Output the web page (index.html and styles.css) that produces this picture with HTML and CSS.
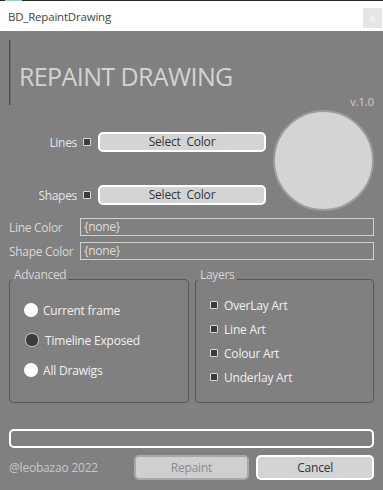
FILE: index.html
```html
<!DOCTYPE html>
<html>
<head>
<meta charset="utf-8">
<link rel="stylesheet" href="styles.css">
</head>
<body>
<div class="topline"><span class="accent"></span></div>
<div class="titlebar">
  <span class="wtitle">BD_RepaintDrawing</span>
  <span class="close">×</span>
</div>
<div class="body">
  <div class="header">
    <div class="vbar"></div>
    <div class="htitle">REPAINT DRAWING</div>
  </div>
  <div class="version">v.1.0</div>
  <div class="colorsec">
    <div class="rows">
      <div class="row">
        <span class="rlabel">Lines</span>
        <span class="chk"></span>
        <button class="btn sel">Select&nbsp; Color</button>
      </div>
      <div class="row">
        <span class="rlabel">Shapes</span>
        <span class="chk"></span>
        <button class="btn sel">Select&nbsp; Color</button>
      </div>
    </div>
    <div class="swatch"></div>
  </div>
  <div class="field">
    <span class="flabel">Line Color</span>
    <div class="finput">{none}</div>
  </div>
  <div class="field">
    <span class="flabel">Shape Color</span>
    <div class="finput">{none}</div>
  </div>
  <div class="groups">
    <fieldset class="group adv">
      <legend>Advanced</legend>
      <div class="opt"><span class="radio"></span>Current frame</div>
      <div class="opt"><span class="radio on"></span>Timeline Exposed</div>
      <div class="opt"><span class="radio"></span>All Drawigs</div>
    </fieldset>
    <fieldset class="group lay">
      <legend>Layers</legend>
      <div class="lopt"><span class="chk"></span>OverLay Art</div>
      <div class="lopt"><span class="chk"></span>Line Art</div>
      <div class="lopt"><span class="chk"></span>Colour Art</div>
      <div class="lopt"><span class="chk"></span>Underlay Art</div>
    </fieldset>
  </div>
  <div class="progress"></div>
  <div class="footer">
    <span class="credit">@leobazao 2022</span>
    <button class="btn repaint">Repaint</button>
    <button class="btn cancel">Cancel</button>
  </div>
</div>
</body>
</html>
```
FILE: styles.css
```css
html, body {
  margin: 0;
  padding: 0;
  width: 383px;
  height: 490px;
  overflow: hidden;
  background: #808080;
  font-family: "Open Sans", "Noto Sans", sans-serif;
}
.topline {
  height: 1px;
  background: #2b2b2b;
  position: relative;
}
.accent {
  position: absolute;
  left: 5px;
  top: 0;
  width: 17px;
  height: 1px;
  background: #8fd0d8;
}
.titlebar {
  height: 30px;
  background: #ffffff;
  display: flex;
  align-items: center;
  justify-content: space-between;
  padding: 0 1px 0 8px;
}
.wtitle {
  font-size: 11.5px;
  color: #444;
  letter-spacing: -0.2px;
}
.close {
  width: 19px;
  height: 20px;
  background: #e6e6e6;
  color: #fafafa;
  font-size: 12px;
  display: flex;
  align-items: center;
  justify-content: center;
  margin-top: 4px;
}
.body {
  padding: 0 9px 0 9px;
}
.header {
  display: flex;
  align-items: flex-end;
  padding-top: 9px;
  height: 65px;
}
.vbar {
  width: 1px;
  height: 65px;
  background: #4e4e4e;
  border-right: 1px solid #6a6a6a;
}
.htitle {
  font-size: 25px;
  color: #d3d3d3;
  margin-left: 8px;
  margin-bottom: 14px;
  letter-spacing: -0.6px;
  line-height: 30px;
}
.version {
  text-align: right;
  font-size: 11px;
  color: #d0d0d0;
  margin-top: -10px;
  line-height: 14px;
}
.colorsec {
  display: flex;
  justify-content: space-between;
  margin-top: 1px;
  margin-bottom: 7px;
}
.rows {
  display: flex;
  flex-direction: column;
  gap: 33px;
  padding-top: 22px;
}
.row {
  display: flex;
  align-items: center;
  width: 258px;
}
.rlabel {
  width: 68px;
  text-align: right;
  font-size: 12px;
  color: #e6e6e6;
  letter-spacing: -0.3px;
}
.chk {
  width: 6px;
  height: 6px;
  background: #3c3c3c;
  border: 1.5px solid #d8d8d8;
  border-radius: 1px;
  display: inline-block;
  flex: none;
}
.row .chk {
  margin-left: 6px;
}
.btn {
  font-family: inherit;
  font-size: 12px;
  color: #333;
  background: #d4d4d4;
  border: 2px solid #ffffff;
  border-radius: 5px;
  padding: 0;
  letter-spacing: -0.2px;
}
.sel {
  margin-left: 7px;
  width: 168px;
  height: 20px;
  line-height: 14px;
}
.swatch {
  width: 97px;
  height: 97px;
  border-radius: 50%;
  background: #d4d4d4;
  border: 2.5px solid #9c9c9c;
  margin-top: 0;
}
.field {
  display: flex;
  align-items: center;
  margin-top: 6px;
}
.flabel {
  width: 71px;
  font-size: 12px;
  color: #d8d8d8;
  letter-spacing: -0.3px;
  white-space: nowrap;
}
.finput {
  flex: 1;
  height: 16px;
  border: 1px solid #d0d0d0;
  font-size: 12px;
  color: #dedede;
  line-height: 16px;
  padding-left: 3px;
  letter-spacing: -0.3px;
}
.groups {
  display: flex;
  gap: 6px;
  margin-top: 8px;
}
.group {
  margin: 0;
  border: 1px solid #575757;
  border-radius: 4px;
  box-sizing: border-box;
  padding: 0;
}
.group legend {
  font-size: 12px;
  color: #d6d6d6;
  padding: 0 2px 8px 2px;
  margin-left: 2px;
  line-height: 14px;
  letter-spacing: -0.3px;
}
.adv { width: 181px; height: 135px; padding-top: 5px; }
.lay { width: 180px; height: 135px; padding-top: 3px; }
.opt {
  display: flex;
  align-items: center;
  font-size: 12px;
  color: #f0f0f0;
  height: 30px;
  padding-left: 14px;
  letter-spacing: -0.2px;
}
.radio {
  width: 14px;
  height: 14px;
  border-radius: 50%;
  background: #ffffff;
  margin-right: 5px;
  box-sizing: border-box;
}
.radio.on {
  background: #3c3c3c;
  border: 1.5px solid #d0d0d0;
  border-radius: 45%;
  margin-left: 1px;
  margin-right: 6px;
}
.lopt {
  display: flex;
  align-items: center;
  font-size: 12px;
  color: #f0f0f0;
  height: 24px;
  padding-left: 14px;
  letter-spacing: -0.2px;
}
.lopt .chk { margin-right: 6px; }
.progress {
  margin-top: 26px;
  height: 15px;
  border: 2px solid #ffffff;
  border-radius: 5px;
}
.footer {
  display: flex;
  align-items: center;
  margin-top: 7px;
}
.credit {
  font-size: 12px;
  color: #c8c8c8;
  width: 125px;
  letter-spacing: -0.2px;
}
.repaint {
  width: 116px;
  height: 25px;
  border-color: #a8a8a8;
  background: #cfcfcf;
  color: #8c8c8c;
}
.cancel {
  width: 118px;
  height: 25px;
  margin-left: 7px;
}
```
